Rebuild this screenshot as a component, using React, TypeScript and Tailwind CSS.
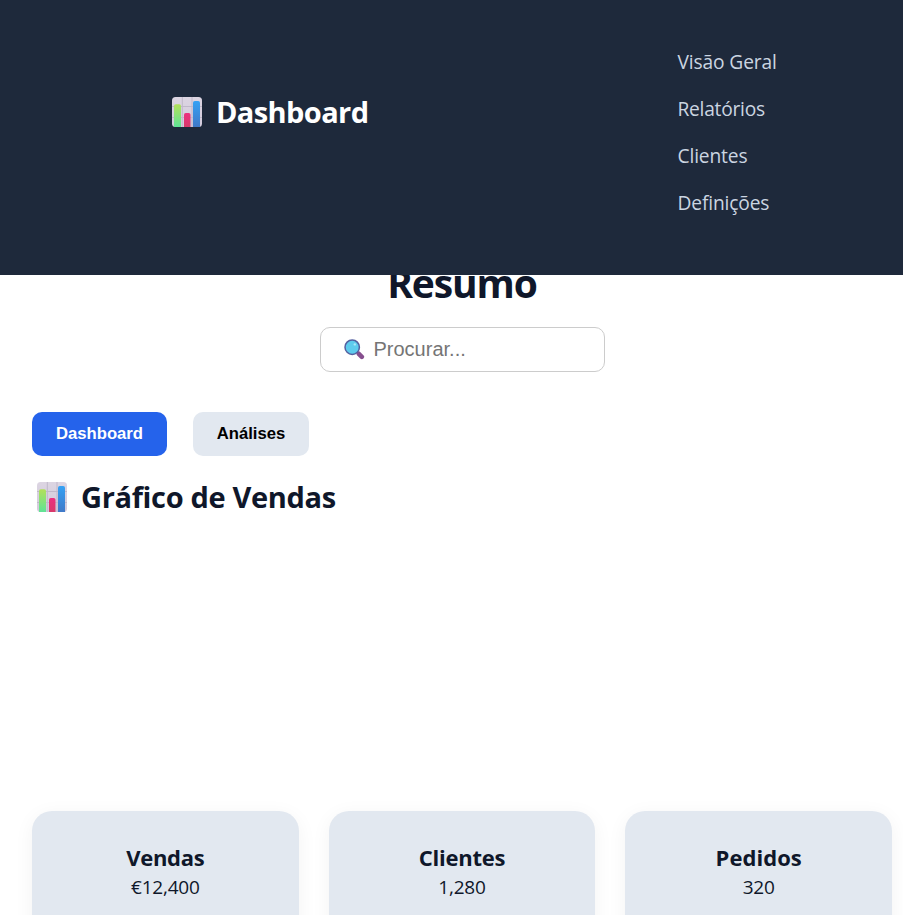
import React from 'react';

const navItems = [
  { label: 'Visão Geral', spacing: 'tracking-[-0.13px]' },
  { label: 'Relatórios', spacing: 'tracking-[-0.25px]' },
  { label: 'Clientes', spacing: 'tracking-[-0.15px]' },
  { label: 'Definições', spacing: 'tracking-[-0.15px]' },
];

const cards = [
  { title: 'Vendas', value: '€12,400', spacing: 'tracking-[-0.3px]' },
  { title: 'Clientes', value: '1,280', spacing: 'tracking-[-0.25px]' },
  { title: 'Pedidos', value: '320', spacing: 'tracking-[0.05px]' },
];

function ChartIcon({ id }: { id: string }) {
  return (
    <svg width="30" height="30" viewBox="0 0 30 30" className="shrink-0" aria-hidden="true">
      <defs>
        <linearGradient id={`${id}-plate`} x1="0" y1="0" x2="0" y2="1">
          <stop offset="0" stopColor="#dcd5e2" />
          <stop offset="1" stopColor="#d2cadb" />
        </linearGradient>
        <linearGradient id={`${id}-green`} x1="0" y1="0" x2="0" y2="1">
          <stop offset="0" stopColor="#b3e05a" />
          <stop offset="1" stopColor="#5fe396" />
        </linearGradient>
        <linearGradient id={`${id}-pink`} x1="0" y1="0" x2="0" y2="1">
          <stop offset="0" stopColor="#ec2f80" />
          <stop offset="1" stopColor="#d8396a" />
        </linearGradient>
        <linearGradient id={`${id}-blue`} x1="0" y1="0" x2="0" y2="1">
          <stop offset="0" stopColor="#35a1f4" />
          <stop offset="1" stopColor="#4079c8" />
        </linearGradient>
      </defs>
      <rect width="30" height="30" rx="3.5" fill={`url(#${id}-plate)`} />
      <path d="M10.3 0v30M20 0v30M0 9.5h30M0 20.5h30" stroke="#c0b8ca" strokeWidth="1" />
      <path d="M2 30V9q0-1.8 1.8-1.8h3.4Q9 7.2 9 9v21z" fill={`url(#${id}-green)`} />
      <path d="M12 30V17.8q0-1.8 1.8-1.8h2.9q1.8 0 1.8 1.8V30z" fill={`url(#${id}-pink)`} />
      <path d="M21 30V5.8Q21 4 22.8 4h3.4Q28 4 28 5.8V30z" fill={`url(#${id}-blue)`} />
    </svg>
  );
}

function SearchIcon() {
  return (
    <svg width="21" height="21" viewBox="0 0 21 21" className="shrink-0" aria-hidden="true">
      <path d="M12.8 12.8l2.5 2.5" stroke="#65518c" strokeWidth="2" />
      <path d="M14.8 14.8l3 3" stroke="#864f8e" strokeWidth="4.6" strokeLinecap="round" />
      <circle cx="8.2" cy="8.2" r="7.2" fill="#5ecbed" stroke="#5460a0" strokeWidth="1.5" />
      <circle cx="10.8" cy="5.4" r="1.2" fill="#a9e8f8" />
    </svg>
  );
}

export default function App() {
  return (
    <div className="h-[915px] w-full overflow-hidden bg-white font-['Open_Sans','Noto_Sans',sans-serif] text-[#0f172a]">
      <header className="relative z-10 flex h-[275px] items-start bg-[#1e293b] pl-[172px]">
        <div className="mt-[92px] flex h-10 w-[505.5px] items-center gap-[14px] text-white">
          <ChartIcon id="brand" />
          <h1 className="pb-px text-[29px] leading-10 font-bold tracking-[-0.6px]">Dashboard</h1>
        </div>
        <nav className="mt-[38px]">
          <ul>
            {navItems.map((item) => (
              <li key={item.label} className={`h-[47px] text-[19.2px] leading-[47px] whitespace-nowrap text-[#cbd5e1] ${item.spacing}`}>
                {item.label}
              </li>
            ))}
          </ul>
        </nav>
      </header>
      <main className="-mt-[19px] ml-8 w-[860px]">
        <h2 className="h-[54px] text-center text-[39px] leading-[54px] font-bold tracking-[-1.1px]">Resumo</h2>
        <div className="mx-auto mt-[17px] flex h-[45px] w-[285px] items-center gap-[9px] rounded-[10px] border border-[#cccccc] bg-white pl-[23px] font-['Liberation_Sans',sans-serif] text-[20px] text-[#757575]">
          <SearchIcon />
          <span className="pb-0.5">Procurar...</span>
        </div>
        <div className="mt-10 flex gap-[26px] font-['Liberation_Sans',sans-serif] text-[16.67px] font-bold">
          <button className="h-11 w-[135px] rounded-[10px] bg-[#2563eb] pb-0.5 text-white">Dashboard</button>
          <button className="h-11 w-[116px] rounded-[10px] bg-[#e2e8f0] pb-0.5 text-black">Análises</button>
        </div>
        <section className="mt-[21px] h-[334px]">
          <div className="flex h-10 items-center gap-[14px] pl-[5px]">
            <ChartIcon id="sales" />
            <h3 className="pb-px text-[29px] leading-10 font-bold tracking-[-0.33px]">Gráfico de Vendas</h3>
          </div>
        </section>
        <section className="grid grid-cols-3 gap-[30px]">
          {cards.map((card) => (
            <article key={card.title} className="h-[130px] rounded-[20px] bg-[#e2e8f0] pt-[31px] text-center shadow-[0_4px_20px_rgba(0,0,0,0.05)]">
              <h4 className={`text-[22px] leading-[30px] font-bold ${card.spacing}`}>{card.title}</h4>
              <p className="pt-0.5 text-[19px] leading-[27px] tracking-[-0.2px]">{card.value}</p>
            </article>
          ))}
        </section>
      </main>
    </div>
  );
}
